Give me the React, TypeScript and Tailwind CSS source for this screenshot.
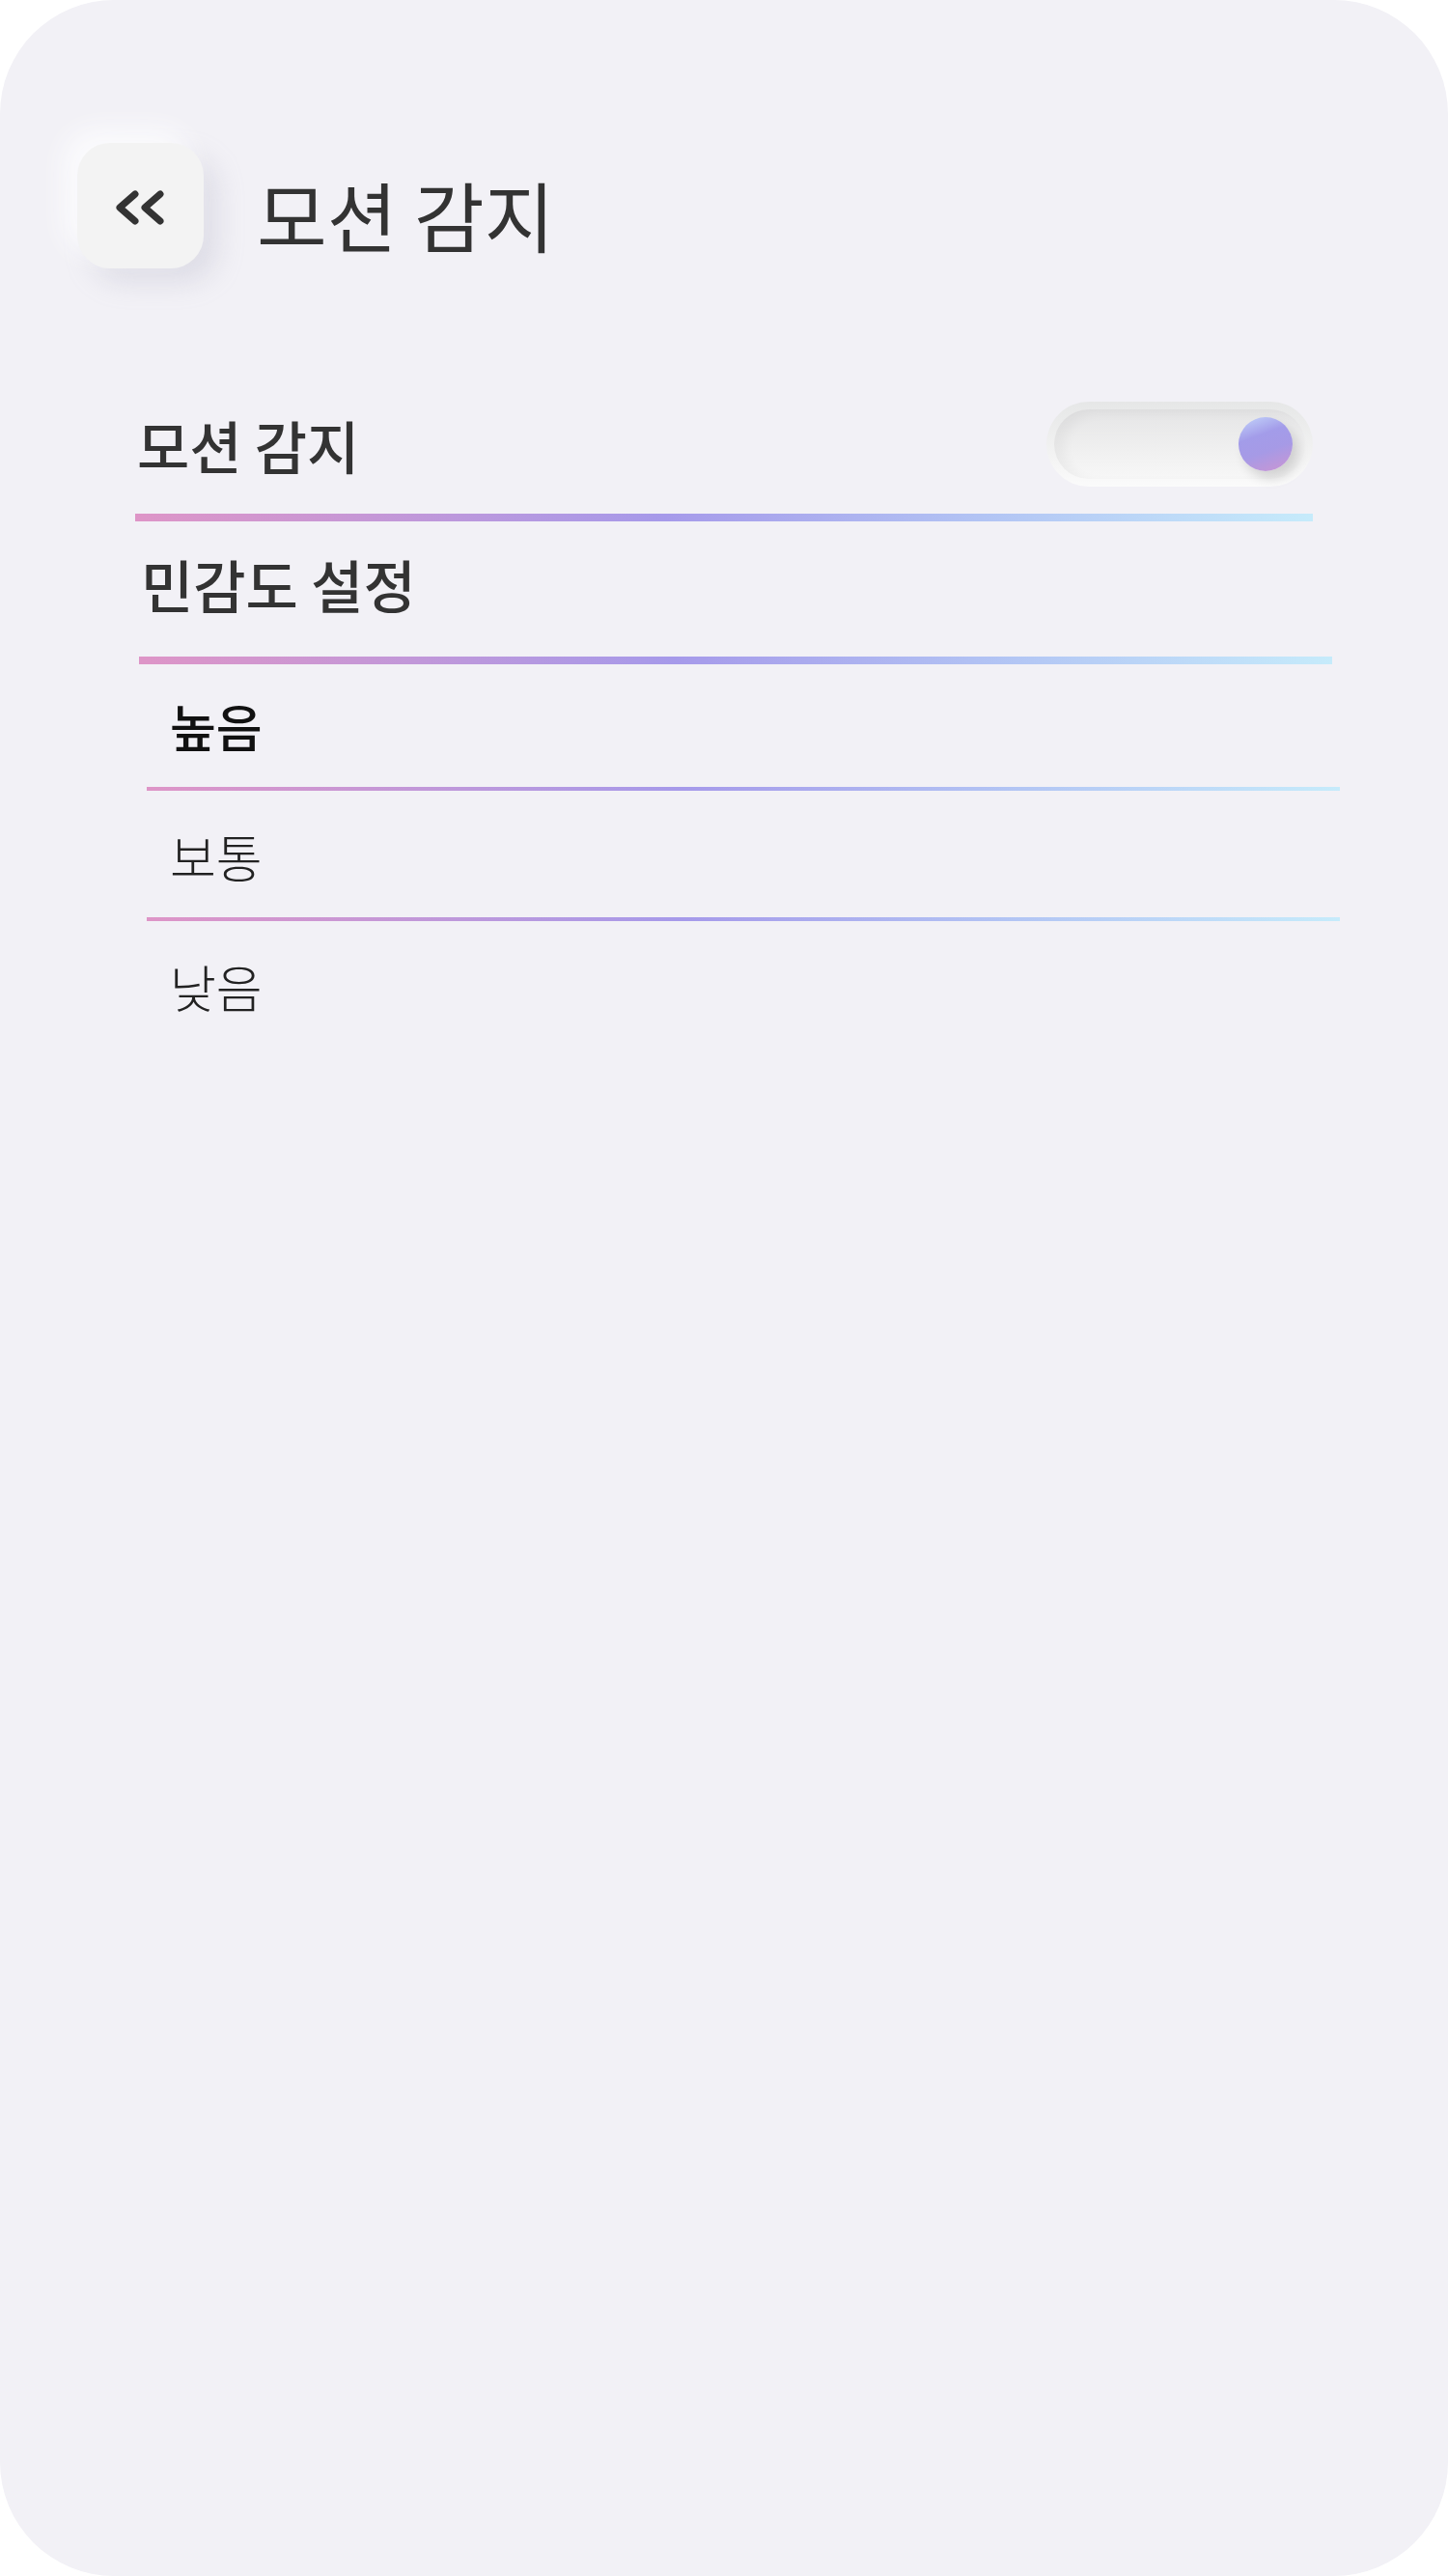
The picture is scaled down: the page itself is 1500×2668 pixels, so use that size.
import { useState } from "react"

const levels = ["높음", "보통", "낮음"]

function BackIcon() {
  return (
    <svg width="52" height="36" viewBox="0 0 52 36" fill="none">
      <polyline points="20,4 4,18 20,32" stroke="#333333" strokeWidth="7" strokeLinecap="round" strokeLinejoin="round" />
      <polyline points="46,4 30,18 46,32" stroke="#333333" strokeWidth="7" strokeLinecap="round" strokeLinejoin="round" />
    </svg>
  )
}

function Toggle({ on, onClick }: { on: boolean; onClick: () => void }) {
  return (
    <button
      onClick={onClick}
      className="w-[276px] h-[88px] rounded-full p-[8px] bg-[linear-gradient(180deg,#e6e7e7_0%,#f4f4f4_70%,#fbfbfb_100%)]"
    >
      <div className="h-full w-full rounded-full flex items-center justify-end pr-[13px] bg-[linear-gradient(180deg,#e5e5e6_0%,#f0f0f0_60%,#f7f7f7_100%)] shadow-[inset_10px_4px_12px_rgba(0,0,0,0.04)]">
        <div
          className={
            on
              ? "w-[56px] h-[56px] rounded-full bg-[linear-gradient(160deg,#c4d6fb_0%,#a39ce9_35%,#a69ae6_60%,#cc95d2_100%)] shadow-[6px_8px_12px_rgba(0,0,0,0.14)]"
              : "w-[56px] h-[56px] rounded-full bg-[#e0e0e0]"
          }
        />
      </div>
    </button>
  )
}

const line = "bg-[linear-gradient(90deg,#de95c7_0%,#a69aea_45%,#b2c4f4_72%,#c6ebfb_100%)]"

export default function App() {
  const [motion, setMotion] = useState(true)
  const [level, setLevel] = useState("높음")

  return (
    <div className="w-[1500px] h-[2668px] bg-white font-['Noto_Sans_CJK_KR','Noto_Sans',sans-serif]">
      <div className="w-full h-full rounded-[118px] bg-[#f2f1f6] overflow-hidden">
        <div className="flex items-start pt-[148px] pl-[80px]">
          <button className="w-[131px] h-[130px] rounded-[34px] bg-[#f3f3f3] flex items-center justify-center pt-[4px] shadow-[-14px_-14px_26px_#fbfbfd,14px_14px_28px_rgba(170,170,190,0.28)]">
            <BackIcon />
          </button>
          <h1 className="ml-[55px] mt-[34px] text-[79px] leading-none font-normal text-[#333333]">모션 감지</h1>
        </div>

        <div className="ml-[140px] w-[1220px] h-[88px] mt-[138px] flex items-center justify-between">
          <span className="pl-[2px] text-[59px] leading-none font-medium text-[#333333]">모션 감지</span>
          <Toggle on={motion} onClick={() => setMotion(!motion)} />
        </div>
        <div className={`ml-[140px] w-[1220px] h-[8px] mt-[28px] ${line}`} />

        <div className="ml-[146px] mt-[35px] text-[59px] leading-none font-medium text-[#333333]">민감도 설정</div>
        <div className={`ml-[144px] w-[1236px] h-[8px] mt-[46px] ${line}`} />

        <div className="flex flex-col">
          {levels.map((l, i) => (
            <div key={l}>
              <button
                onClick={() => setLevel(l)}
                className={
                  l === level
                    ? "ml-[176px] mt-[38px] text-[52px] leading-none font-medium text-[#111111]"
                    : "ml-[176px] mt-[42px] text-[52px] leading-none font-light text-[#222222]"
                }
              >
                {l}
              </button>
              {i < levels.length - 1 && <div className={`ml-[152px] w-[1236px] h-[4px] mt-[36px] ${line}`} />}
            </div>
          ))}
        </div>
      </div>
    </div>
  )
}
